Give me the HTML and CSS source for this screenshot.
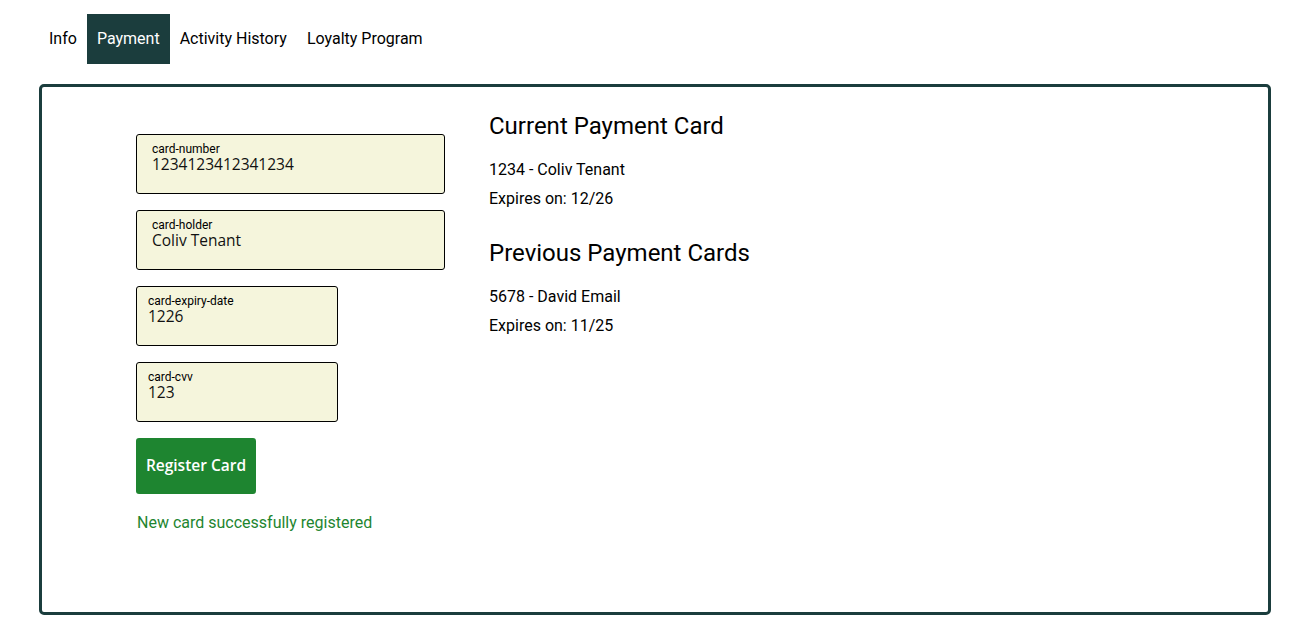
FILE: index.html
```html
<!DOCTYPE html>
<html lang="en">
<head>
<meta charset="utf-8">
<title>Payment</title>
<link rel="stylesheet" href="styles.css">
</head>
<body>
<div class="page">
  <nav class="tabs">
    <a class="tab">Info</a>
    <a class="tab active">Payment</a>
    <a class="tab">Activity History</a>
    <a class="tab">Loyalty Program</a>
  </nav>
  <section class="panel">
    <form class="card-form">
      <div class="field wide">
        <label class="field-label">card-number</label>
        <input class="field-input" type="text" value="1234123412341234">
      </div>
      <div class="field wide">
        <label class="field-label">card-holder</label>
        <input class="field-input" type="text" value="Coliv Tenant">
      </div>
      <div class="field narrow">
        <label class="field-label">card-expiry-date</label>
        <input class="field-input" type="text" value="1226">
      </div>
      <div class="field narrow">
        <label class="field-label">card-cvv</label>
        <input class="field-input" type="text" value="123">
      </div>
      <button class="register-btn" type="button">Register Card</button>
      <p class="success">New card successfully registered</p>
    </form>
    <div class="cards">
      <div class="card-group">
        <h2 class="group-title">Current Payment Card</h2>
        <p class="card-line">1234 - Coliv Tenant</p>
        <p class="card-line">Expires on: 12/26</p>
      </div>
      <div class="card-group">
        <h2 class="group-title">Previous Payment Cards</h2>
        <p class="card-line">5678 - David Email</p>
        <p class="card-line">Expires on: 11/25</p>
      </div>
    </div>
  </section>
</div>
</body>
</html>
```
FILE: styles.css
```css
* { box-sizing: border-box; }

body {
  margin: 0;
  background: #ffffff;
  font-family: Roboto, "Liberation Sans", sans-serif;
  color: #000000;
}

.page {
  padding: 14px 38px 16px 39px;
}

.tabs {
  display: flex;
}

.tab {
  display: block;
  padding: 15px 10px;
  font-size: 16px;
  line-height: 20px;
  color: #000000;
  text-decoration: none;
}

.tab.active {
  background: #1b3d3d;
  color: #ffffff;
}

.panel {
  margin-top: 20px;
  border: 3px solid #1b3d3d;
  border-radius: 5px;
  display: flex;
  gap: 44px;
  padding: 25px 20px 0 94px;
  height: 531px;
}

.card-form {
  width: 309px;
  padding-top: 22px;
  display: flex;
  flex-direction: column;
  align-items: flex-start;
  gap: 16px;
}

.field {
  height: 60px;
  background: #f5f5dc;
  border: 1px solid #000000;
  border-radius: 3px;
  padding: 7px 12px 0 12px;
  display: flex;
  flex-direction: column;
}

.field.wide {
  width: 309px;
  padding-left: 15px;
}

.field.narrow {
  width: 202px;
  padding-left: 11px;
}

.field-label {
  font-family: Roboto, "Liberation Sans", sans-serif;
  font-size: 12px;
  line-height: 14px;
  color: #000000;
}

.field-input {
  border: none;
  background: transparent;
  padding: 0;
  margin: -1px 0 0;
  outline: none;
  width: 100%;
  font-family: "Open Sans", "Noto Sans", sans-serif;
  font-size: 15.5px;
  line-height: 18px;
  height: 18px;
  color: #111111;
}

.register-btn {
  width: 120px;
  height: 56px;
  border: none;
  border-radius: 3px;
  background: #1e8530;
  color: #ffffff;
  font-family: "Open Sans", "Noto Sans", sans-serif;
  font-size: 15.5px;
  font-weight: 600;
  padding: 0 6px 2px;
}

.success {
  margin: 3px 0 0 1px;
  font-size: 16px;
  line-height: 19px;
  color: #1e8530;
}

.cards {
  display: flex;
  flex-direction: column;
}

.card-group {
  margin-bottom: 21px;
}

.group-title {
  margin: 0 0 20px;
  font-size: 24px;
  font-weight: 400;
  line-height: 28px;
}

.card-line {
  margin: 0 0 10px;
  font-size: 16px;
  line-height: 19px;
}
```
